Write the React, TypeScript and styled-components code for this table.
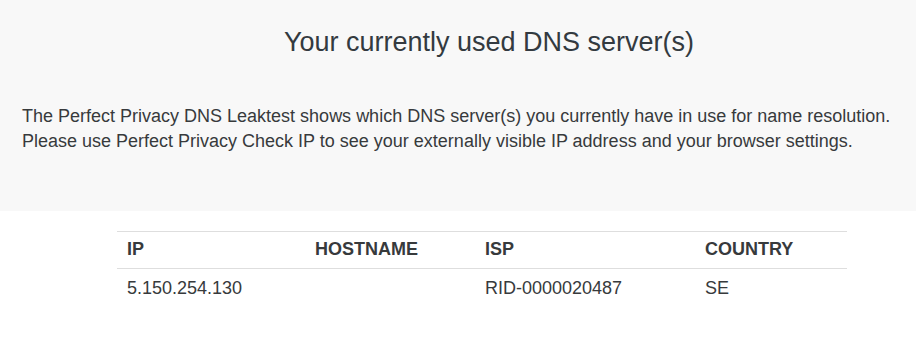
import styled, { createGlobalStyle } from 'styled-components'

const GlobalStyle = createGlobalStyle`
  body {
    margin: 0;
    background: #fff;
    font-family: "Liberation Sans", Arial, sans-serif;
    color: #373a3c;
  }
`

const Intro = styled.section`
  background-color: #f8f8f8;
  padding: 24px 22px 0;
  height: 211px;
  box-sizing: border-box;
`

const Title = styled.h1`
  margin: 0;
  padding-left: 62px;
  text-align: center;
  font-size: 27px;
  font-weight: 400;
  line-height: 36px;
  color: #333a40;
`

const Lead = styled.p`
  margin: 44px 0 0;
  font-size: 18px;
  line-height: 25px;
`

const TableWrap = styled.div`
  padding: 20px 0 0 117px;
`

const Table = styled.table`
  width: 730px;
  table-layout: fixed;
  border-collapse: collapse;
  font-size: 18px;
`

const Th = styled.th<{ $w: number }>`
  box-sizing: border-box;
  width: ${p => p.$w}px;
  text-align: left;
  font-weight: 700;
  padding: 7px 10px 9px;
  line-height: 20px;
  border-top: 1px solid #dedede;
  border-bottom: 1px solid #dedede;
`

const Td = styled.td`
  padding: 9px 10px 11px;
  line-height: 21px;
`

const columns = [
  { label: 'IP', w: 188 },
  { label: 'HOSTNAME', w: 170 },
  { label: 'ISP', w: 220 },
  { label: 'COUNTRY', w: 152 },
]

const rows = [['5.150.254.130', '', 'RID-0000020487', 'SE']]

export default function App() {
  return (
    <>
      <GlobalStyle />
      <Intro>
        <Title>Your currently used DNS server(s)</Title>
        <Lead>
          The Perfect Privacy DNS Leaktest shows which DNS server(s) you currently have in use for name resolution.
          <br />
          Please use Perfect Privacy Check IP to see your externally visible IP address and your browser settings.
        </Lead>
      </Intro>
      <TableWrap>
        <Table>
          <thead>
            <tr>
              {columns.map(c => (
                <Th key={c.label} $w={c.w}>{c.label}</Th>
              ))}
            </tr>
          </thead>
          <tbody>
            {rows.map((r, i) => (
              <tr key={i}>
                {r.map((cell, j) => <Td key={j}>{cell}</Td>)}
              </tr>
            ))}
          </tbody>
        </Table>
      </TableWrap>
    </>
  )
}
